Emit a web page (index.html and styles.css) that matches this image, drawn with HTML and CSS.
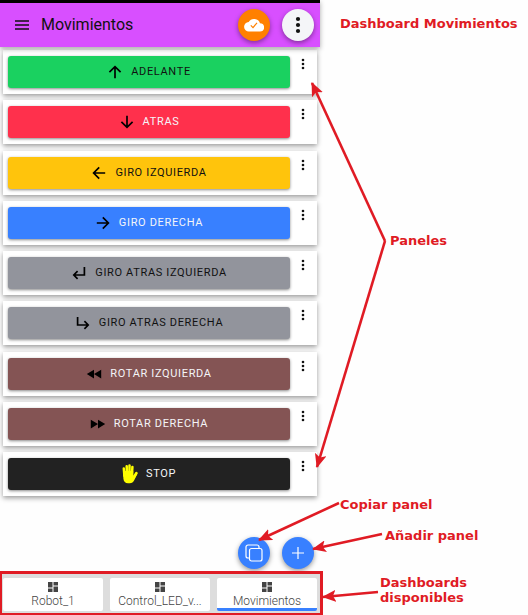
FILE: index.html
```html
<!DOCTYPE html>
<html lang="es">
<head>
<meta charset="utf-8">
<meta name="viewport" content="width=device-width, initial-scale=1">
<title>Dashboard Movimientos</title>
<link rel="stylesheet" href="styles.css">
</head>
<body>
<svg class="symbols" aria-hidden="true">
  <symbol id="kebab" viewBox="0 0 6 12"><circle cx="3" cy="2" r="1.3"/><circle cx="3" cy="6" r="1.3"/><circle cx="3" cy="10" r="1.3"/></symbol>
  <symbol id="arrow" viewBox="0 0 16 16"><path d="M8 14.200V3M2.400 8.200 8 2.600l5.600 5.600" fill="none" stroke="currentColor" stroke-width="1.700"/></symbol>
  <symbol id="return" viewBox="0 0 16 16"><path d="M13.400 2v8H3M6.600 6.200 2.800 10l3.800 3.800" fill="none" stroke="currentColor" stroke-width="1.700"/></symbol>
  <symbol id="rewind" viewBox="0 0 16 16"><path d="M8 3.800v8.600L.8 8.100zM15.200 3.800v8.600L8 8.100z"/></symbol>
  <symbol id="dashboard" viewBox="0 0 10 10"><path d="M0 0h4.500v5.500H0zM5.500 0H10v3.500H5.500zM0 6.500h4.500V10H0zM5.500 4.500H10V10H5.500z"/></symbol>
</svg>
<div class="stage">
  <main class="phone">
    <header class="toolbar">
      <button class="menu" aria-label="Menú"><svg viewBox="0 0 14 10"><path d="M0 1h14M0 5h14M0 9h14" fill="none" stroke="currentColor" stroke-width="1.700"/></svg></button>
      <h1 class="title">Movimientos</h1>
      <button class="round round-cloud" aria-label="Sincronizado"><svg class="cloud" viewBox="0 0 20 14"><path d="M16 5.300A6.200 6.200 0 0 0 4.700 4 4.700 4.700 0 0 0 5 13.500h11a4.100 4.100 0 0 0 0-8.200z" fill="#fff"/><path d="m6.800 7.400 2.200 2.200 4-4.800" fill="none" stroke="#ff8000" stroke-width="1.200"/></svg></button>
      <button class="round round-more" aria-label="Más opciones"><svg class="more" viewBox="0 0 6 18"><circle cx="3" cy="3" r="2.100"/><circle cx="3" cy="9" r="2.100"/><circle cx="3" cy="15" r="2.100"/></svg></button>
    </header>
    <section class="panels">
      <article class="panel"><button class="action green"><svg class="icon"><use href="#arrow"/></svg>Adelante</button><button class="kebab" aria-label="Opciones de Adelante"><svg><use href="#kebab"/></svg></button></article>
      <article class="panel"><button class="action red"><svg class="icon down"><use href="#arrow"/></svg><span>Atras</span></button><button class="kebab" aria-label="Opciones de Atras"><svg><use href="#kebab"/></svg></button></article>
      <article class="panel"><button class="action yellow"><svg class="icon left"><use href="#arrow"/></svg>Giro izquierda</button><button class="kebab" aria-label="Opciones de Giro izquierda"><svg><use href="#kebab"/></svg></button></article>
      <article class="panel"><button class="action blue"><svg class="icon right"><use href="#arrow"/></svg><span>Giro derecha</span></button><button class="kebab" aria-label="Opciones de Giro derecha"><svg><use href="#kebab"/></svg></button></article>
      <article class="panel"><button class="action gray"><svg class="icon"><use href="#return"/></svg>Giro atras izquierda</button><button class="kebab" aria-label="Opciones de Giro atras izquierda"><svg><use href="#kebab"/></svg></button></article>
      <article class="panel"><button class="action gray"><svg class="icon mirror"><use href="#return"/></svg>Giro atras derecha</button><button class="kebab" aria-label="Opciones de Giro atras derecha"><svg><use href="#kebab"/></svg></button></article>
      <article class="panel"><button class="action brown"><svg class="icon"><use href="#rewind"/></svg><span>Rotar izquierda</span></button><button class="kebab" aria-label="Opciones de Rotar izquierda"><svg><use href="#kebab"/></svg></button></article>
      <article class="panel"><button class="action brown"><svg class="icon mirror"><use href="#rewind"/></svg><span>Rotar derecha</span></button><button class="kebab" aria-label="Opciones de Rotar derecha"><svg><use href="#kebab"/></svg></button></article>
      <article class="panel"><button class="action black"><svg class="icon hand" viewBox="0 0 16 20"><g fill="none" stroke="#ff0" stroke-linecap="round" stroke-width="2.500"><path d="M1.800 4.500 2.400 12M4.700 2.300 5 12M7.500 1.400V12M10.400 2.900 9.900 12M14.400 9l-4 6.500"/></g><path d="M1 7h10.200v5.500l2.400-3.800 2 .8-3.400 6.800c-.9 2-2.300 3-4.500 3H6c-2.800 0-4.200-1.800-4.600-4.600z" fill="#ff0"/></svg><span>Stop</span></button><button class="kebab" aria-label="Opciones de Stop"><svg><use href="#kebab"/></svg></button></article>
    </section>
    <div class="floating">
      <button class="round round-blue" aria-label="Copiar panel"><svg class="fab-icon" viewBox="0 0 18 18"><g fill="none" stroke="#fff" stroke-width="1.200"><rect x="4.500" y="4.500" width="12.500" height="12.500" rx="2"/><path d="M14 4.500V3a2 2 0 0 0-2-2H3a2 2 0 0 0-2 2v9a2 2 0 0 0 2 2h1.500"/></g></svg></button>
      <button class="round round-blue" aria-label="Añadir panel"><svg class="fab-icon" viewBox="0 0 18 18"><path d="M9 3v12M3 9h12" fill="none" stroke="#fff" stroke-width="1.200"/></svg></button>
    </div>
    <nav class="tabs">
      <a class="tab" href="#robot"><svg><use href="#dashboard"/></svg><span>Robot_1</span></a>
      <a class="tab" href="#control"><svg><use href="#dashboard"/></svg><span>Control_LED_v...</span></a>
      <a class="tab active" href="#movimientos" aria-current="page"><svg><use href="#dashboard"/></svg><span>Movimientos</span></a>
    </nav>
  </main>
  <svg class="arrows" viewBox="0 0 528 615" preserveAspectRatio="none" aria-hidden="true">
    <defs><marker id="head" viewBox="0 0 14 12" refX="13" refY="6" markerWidth="14" markerHeight="12" markerUnits="userSpaceOnUse" orient="auto"><path d="M14 6 0 12l3-6-3-6z" fill="#e01b24"/></marker></defs>
    <g fill="none" stroke="#e01b24" stroke-width="2.600" marker-end="url(#head)">
      <path d="M385 241 312 83"/>
      <path d="M385 241 317 467"/>
      <path d="M339 503 259 540"/>
      <path d="M382 534 313 549"/>
      <path d="M378 592 323 597"/>
    </g>
  </svg>
  <aside class="notes">
    <p class="note note-title">Dashboard Movimientos</p>
    <p class="note note-panels">Paneles</p>
    <p class="note note-copy">Copiar panel</p>
    <p class="note note-add">Añadir panel</p>
    <p class="note note-tabs">Dashboards disponibles</p>
  </aside>
</div>
</body>
</html>
```
FILE: styles.css
```css
* { box-sizing: border-box; }
body { margin: 0; background: #fefefe; color: #111; font-family: Roboto, "Liberation Sans", sans-serif; }
button { border: 0; padding: 0; font: inherit; color: #111; cursor: pointer; }
svg { display: block; fill: currentColor; }
.symbols { display: none; }

.stage { position: relative; display: grid; grid-template-columns: 20fr 13fr; min-height: 100vh; }
.phone { position: relative; display: flex; flex-direction: column; }

.toolbar { position: relative; display: flex; align-items: center; gap: 12px; height: 47px; padding: 0 6px 0 15px; border-top: 3px solid #000; background: #d84fff; box-shadow: 0 2px 5px #0005; }
.menu { width: 14px; height: 10px; background: none; }
.title { flex: 1; margin: 0; font-size: 16px; font-weight: 400; line-height: 20px; }
.round { display: grid; place-items: center; width: 32px; height: 32px; border-radius: 50%; box-shadow: 0 2px 5px #0006; }
.round-cloud { background: #ff8000; }
.round-more { background: #f4f5f8; }
.round-blue { background: #3880ff; }
.cloud { width: 20px; height: 14px; }
.more { width: 6px; height: 18px; }
.fab-icon { width: 18px; height: 18px; }

.panels { flex: 1; display: grid; align-content: space-between; padding: 3px 3px 75px; }
.panel { display: flex; align-items: flex-start; height: 44px; padding: 6px 5px; background: #fff; box-shadow: 0 2px 5px #0006; }
.action { flex: 1; display: flex; align-items: center; justify-content: center; gap: 8px; height: 32px; border-radius: 3px; font-size: 11px; line-height: 16px; letter-spacing: 0.06em; text-transform: uppercase; box-shadow: 0 1px 3px #0007; }
.action span { color: #f4f5f8; }
.icon { width: 16px; height: 16px; color: #000; }
.down { transform: rotate(180deg); }
.left { transform: rotate(-90deg); }
.right { transform: rotate(90deg); }
.mirror { transform: scaleX(-1); }
.hand { height: 20px; }
.green { background: #1ad160; }
.red { background: #ff304c; }
.yellow { background: #ffc40c; }
.blue { background: #3880ff; }
.gray { background: #92949c; }
.brown { background: #845454; }
.black { background: #222; }
.kebab { display: grid; justify-items: center; width: 22px; height: 16px; padding: 2px 0 0 4px; background: none; }
.kebab svg { width: 6px; height: 12px; }

.floating { position: absolute; right: 6px; bottom: 46px; display: flex; gap: 12px; }
.tabs { position: relative; display: grid; grid-template-columns: repeat(3, minmax(0, 1fr)); gap: 7px; height: 44px; margin-right: -3px; padding: 4px 3px 2px 1px; border: solid #e01b24; border-width: 3px 3px 2px 2px; background: #ddd; }
.tab { display: flex; flex-direction: column; align-items: center; gap: 2px; padding-top: 4px; border-bottom: 3px solid transparent; border-radius: 2px; background: #fff; color: #444; font-size: 12px; font-weight: 300; line-height: 14px; text-decoration: none; }
.tab svg { width: 10px; height: 10px; }
.active { border-bottom-color: #3880ff; }

.arrows { position: absolute; inset: 0; width: 100%; height: 100%; pointer-events: none; }
.note { position: absolute; margin: 0; color: #e01b24; font: bold 13px/15px "DejaVu Sans", sans-serif; }
.note-title { left: 340px; top: 16px; }
.note-panels { left: 390px; top: 233px; }
.note-copy { left: 340px; bottom: 103px; }
.note-add { left: 385px; bottom: 72px; }
.note-tabs { left: 380px; bottom: 10px; width: 100px; }
```
